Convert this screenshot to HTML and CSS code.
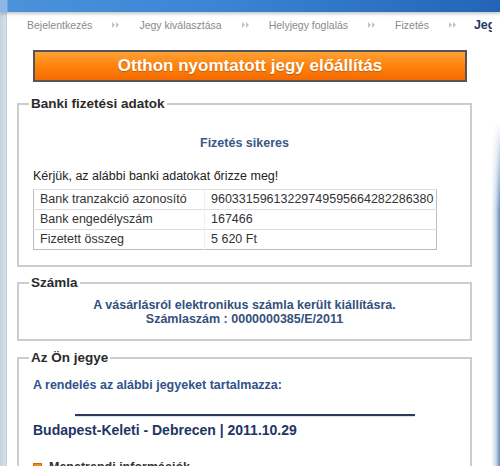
FILE: index.html
```html
<!DOCTYPE html>
<html lang="hu">
<head>
<meta charset="utf-8">
<title>Otthon nyomtatott jegy előállítás</title>
<link rel="stylesheet" href="styles.css">
</head>
<body>
<div class="topbar"></div>
<div class="frame">
  <div class="leftstrip"></div>
  <div class="main">
    <nav class="steps">
      <span class="step">Bejelentkezés</span>
      <svg class="arr" width="7" height="6" viewBox="0 0 7 6"><polygon points="0,0 3,3 0,6"/><polygon points="4,0 7,3 4,6"/></svg>
      <span class="step">Jegy kiválasztása</span>
      <svg class="arr" width="7" height="6" viewBox="0 0 7 6"><polygon points="0,0 3,3 0,6"/><polygon points="4,0 7,3 4,6"/></svg>
      <span class="step">Helyjegy foglalás</span>
      <svg class="arr" width="7" height="6" viewBox="0 0 7 6"><polygon points="0,0 3,3 0,6"/><polygon points="4,0 7,3 4,6"/></svg>
      <span class="step">Fizetés</span>
      <svg class="arr" width="7" height="6" viewBox="0 0 7 6"><polygon points="0,0 3,3 0,6"/><polygon points="4,0 7,3 4,6"/></svg>
      <span class="step current">Jegy előállítás</span>
    </nav>

    <div class="banner">Otthon nyomtatott jegy előállítás</div>

    <fieldset class="box bank">
      <legend>Banki fizetési adatok</legend>
      <div class="success">Fizetés sikeres</div>
      <p class="note">Kérjük, az alábbi banki adatokat őrizze meg!</p>
      <table class="data">
        <tr><td class="k">Bank tranzakció azonosító</td><td>96033159613229749595664282286380</td></tr>
        <tr><td class="k">Bank engedélyszám</td><td>167466</td></tr>
        <tr><td class="k">Fizetett összeg</td><td>5 620 Ft</td></tr>
      </table>
    </fieldset>

    <fieldset class="box invoice">
      <legend>Számla</legend>
      <div class="invtext">A vásárlásról elektronikus számla került kiállításra.<br>Számlaszám : 0000000385/E/2011</div>
    </fieldset>

    <fieldset class="box ticket">
      <legend>Az Ön jegye</legend>
      <div class="order">A rendelés az alábbi jegyeket tartalmazza:</div>
      <div class="rule"></div>
      <div class="route">Budapest-Keleti - Debrecen | 2011.10.29</div>
      <div class="info"><span class="sq"></span>Menetrendi információk</div>
    </fieldset>
  </div>
  <div class="rightstrip"></div>
</div>
</body>
</html>
```

FILE: styles.css
```css
html, body {
  margin: 0;
  padding: 0;
}
body {
  width: 500px;
  height: 466px;
  overflow: hidden;
  background: #fff;
  font-family: "Liberation Sans", Arial, sans-serif;
  color: #333;
}
.topbar {
  height: 12px;
  background: linear-gradient(to right, #8db7e2 0, #8db7e2 7px, #4b92da 8px, #3a84d4 45%, #2364b6 100%);
  box-shadow: 0 2px 3px rgba(90, 100, 110, 0.35);
  position: relative;
  z-index: 1;
}
.frame {
  display: flex;
  height: 454px;
}
.leftstrip {
  width: 7px;
  flex: none;
  background: linear-gradient(to right, #c3d2e2, #d3dfeb 80%, #b9c9da);
}
.main {
  width: 485px;
  flex: none;
  background: #fff;
}
.rightstrip {
  width: 8px;
  flex: none;
  background:
    linear-gradient(to bottom, #fff 0, #fff 110px, rgba(255,255,255,0) 200px),
    linear-gradient(to right, #f4f8fc, #c9d8ea 50%, #7f9fca 85%, #6a8bbb);
}

/* steps */
.steps {
  display: flex;
  align-items: center;
  gap: 20px;
  margin-top: 6px;
  padding-left: 20px;
  height: 14px;
  white-space: nowrap;
  font-size: 10.5px;
  line-height: 14px;
}
.step {
  color: #8a8a8a;
}
.step.current {
  color: #1f3766;
  font-weight: bold;
  font-size: 12.5px;
  margin-left: -2px;
}
.arr {
  flex: none;
  fill: #c4c4c4;
}

/* banner */
.banner {
  margin: 18px 25px 0 26px;
  height: 28px;
  border: 2px solid #555;
  background: linear-gradient(to bottom, #ffa238 0%, #ff860f 45%, #f56a00 100%);
  color: #fff;
  font-weight: bold;
  font-size: 17px;
  line-height: 28px;
  text-align: center;
  text-shadow: 0 1px 1px rgba(130, 50, 0, 0.45);
}

/* fieldsets */
.box {
  margin: 0 20px 0 10px;
  padding: 0 14px;
  border: 2px solid #cdcdcd;
  min-inline-size: 0;
}
.box legend {
  margin-left: -4px;
  padding: 0 2px;
  font-weight: bold;
  font-size: 13.5px;
  line-height: 16px;
  color: #2b2b2b;
}
.bank {
  margin-top: 14px;
  padding-bottom: 15px;
}
.success {
  margin-top: 23px;
  text-align: center;
  font-weight: bold;
  font-size: 12.5px;
  line-height: 16px;
  color: #3a5888;
}
.note {
  margin: 17px 0 5px;
  font-size: 12.5px;
  line-height: 16px;
  color: #222;
}
.data {
  width: 404px;
  border-collapse: collapse;
  border: 1px solid #bdbdbd;
  font-size: 12.5px;
  color: #333;
}
.data td {
  height: 19px;
  padding: 0 0 0 6px;
  border-top: 1px solid #dedede;
  border-left: 1px solid #f0f0f0;
  line-height: 19px;
  white-space: nowrap;
}
.data td.k {
  width: 164px;
  border-left: 0;
}

.invoice {
  margin-top: 8px;
  padding-bottom: 13px;
}
.invtext {
  margin-top: 7px;
  text-align: center;
  font-weight: bold;
  font-size: 12.5px;
  line-height: 14px;
  color: #34507e;
}

.ticket {
  margin-top: 9px;
  padding-bottom: 20px;
}
.order {
  margin-top: 11px;
  font-weight: bold;
  font-size: 12.5px;
  line-height: 16px;
  color: #30538c;
}
.rule {
  width: 340px;
  margin: 21px auto 0;
  height: 0;
  border-top: 2px solid #2a3a5c;
  box-shadow: 0 1px 1px #d8e0ea;
}
.route {
  margin-top: 6px;
  font-weight: bold;
  font-size: 14px;
  line-height: 17px;
  color: #1f3566;
}
.info {
  margin-top: 20px;
  display: flex;
  align-items: center;
  gap: 7px;
  font-weight: bold;
  font-size: 12.5px;
  line-height: 16px;
  color: #333;
}
.sq {
  width: 7px;
  height: 7px;
  background: #f08a1c;
  border: 1px solid #d06a00;
}
```
